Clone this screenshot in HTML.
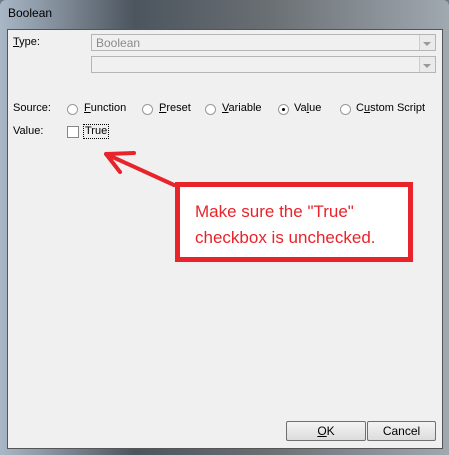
<html><head><style>
body{margin:0;width:449px;height:455px;overflow:hidden;background:#6f7a86;font-family:Tahoma,"Liberation Sans",sans-serif;font-size:11px;color:#000}
.frame{position:absolute;left:0;top:0;width:449px;height:455px;background:linear-gradient(90deg,#a9b7c6,#4c555e 30%,#6a6f73 60%,#a0a8b0);border-radius:6px 6px 0 0}
.title{position:absolute;left:8px;top:6px;font-size:12px;font-family:"Liberation Sans",sans-serif}
.client{position:absolute;left:7px;top:29px;width:434px;height:418px;background:#f0f0f0;border:1px solid #555}
.lbl{position:absolute}
.combo{position:absolute;left:83px;width:345px;height:17px;border:1px solid #b5b5b5;background:#f0f0f0;color:#8a8a8a;font-size:12px;line-height:17px;padding-left:4px;box-sizing:border-box}
.combo:after{content:"";position:absolute;right:0;top:0;width:15px;height:15px;border-left:1px solid #ccc;background:#eaeaea}
.combo i{position:absolute;right:4px;top:7px;border:4px solid transparent;border-top:4px solid #999;border-bottom:0;z-index:2}
.rad{position:absolute;width:9px;height:9px;border:1px solid #999;border-radius:50%;background:#fff}
.btn{position:absolute;top:391px;height:20px;border:1px solid #707070;background:linear-gradient(#f4f4f4,#dcdcdc);text-align:center;line-height:19px;font-size:12px;box-sizing:border-box;border-radius:2px}
u{text-decoration:underline}
</style></head><body>
<div class="frame"></div>
<div class="title">Boolean</div>
<div class="client">
<div class="lbl" style="left:5px;top:6px"><u>T</u>ype:</div>
<div class="combo" style="top:4px">Boolean<i></i></div>
<div class="combo" style="top:26px"><i></i></div>
<div class="lbl" style="left:5px;top:72px">Source:</div>
<div class="rad" style="left:59px;top:74px"></div><div class="lbl" style="left:76px;top:72px"><u>F</u>unction</div>
<div class="rad" style="left:134px;top:74px"></div><div class="lbl" style="left:151px;top:72px"><u>P</u>reset</div>
<div class="rad" style="left:197px;top:74px"></div><div class="lbl" style="left:214px;top:72px"><u>V</u>ariable</div>
<div class="rad" style="left:270px;top:74px"><div style="position:absolute;left:3px;top:3px;width:3px;height:3px;background:#000;border-radius:50%"></div></div><div class="lbl" style="left:286px;top:72px">Va<u>l</u>ue</div>
<div class="rad" style="left:332px;top:74px"></div><div class="lbl" style="left:348px;top:72px">C<u>u</u>stom Script</div>
<div class="lbl" style="left:5px;top:95px">Value:</div>
<div style="position:absolute;left:59px;top:96px;width:10px;height:10px;border:1px solid #888;background:#fff"></div>
<div class="lbl" style="left:75px;top:94px;border:1px dotted #000;padding:0 1px;line-height:13px">True</div>
<div class="btn" style="left:278px;width:80px"><u>O</u>K</div>
<div class="btn" style="left:359px;width:69px">Cancel</div>
</div>
<div style="position:absolute;left:175px;top:182px;width:238px;height:80px;box-sizing:border-box;border:5px solid #e8232a;background:#fff;color:#e8232a;font-family:'Liberation Sans',sans-serif;font-size:17px;line-height:26px;padding:12px 0 0 15px;white-space:nowrap">Make sure the "True"<br>checkbox is unchecked.</div>
<svg style="position:absolute;left:0;top:0" width="449" height="455"><g stroke="#e8232a" stroke-width="4" stroke-linecap="round" fill="none"><path d="M174 185L106 154M106 154L134 153M106 154L120 172"/></g></svg>
</body></html>
